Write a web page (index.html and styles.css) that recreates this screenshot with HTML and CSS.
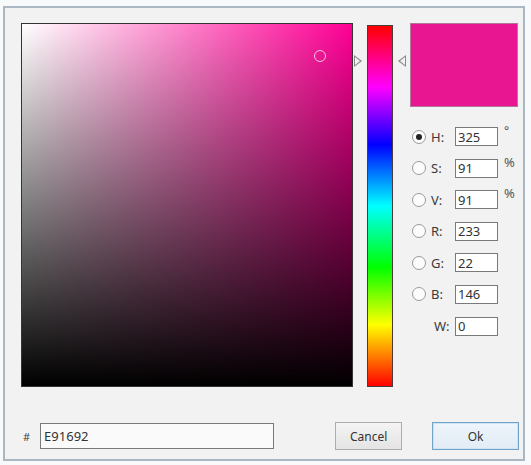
FILE: index.html
```html
<!DOCTYPE html>
<html>
<head>
<title>Color Picker</title>
<link rel="stylesheet" href="styles.css">
</head>
<body>
  <div class="dialog">
    <div class="picker">
      <div class="sv-box">
        <span class="sv-marker"></span>
      </div>
      <div class="hue-col">
        <div class="hue-bar"></div>
        <span class="arrow arrow-left"></span>
        <span class="arrow arrow-right"></span>
      </div>
      <div class="side">
        <div class="preview"></div>
        <div class="fields">
          <div class="field-row">
            <span class="radio checked"></span>
            <span class="label">H:</span>
            <input type="text" class="num" value="325">
            <span class="unit deg">&deg;</span>
          </div>
          <div class="field-row">
            <span class="radio"></span>
            <span class="label">S:</span>
            <input type="text" class="num" value="91">
            <span class="unit">%</span>
          </div>
          <div class="field-row">
            <span class="radio"></span>
            <span class="label">V:</span>
            <input type="text" class="num" value="91">
            <span class="unit">%</span>
          </div>
          <div class="field-row">
            <span class="radio"></span>
            <span class="label">R:</span>
            <input type="text" class="num" value="233">
          </div>
          <div class="field-row">
            <span class="radio"></span>
            <span class="label">G:</span>
            <input type="text" class="num" value="22">
          </div>
          <div class="field-row">
            <span class="radio"></span>
            <span class="label">B:</span>
            <input type="text" class="num" value="146">
          </div>
          <div class="field-row">
            <span class="radio blank"></span>
            <span class="label w-label">W:</span>
            <input type="text" class="num" value="0">
          </div>
        </div>
      </div>
    </div>
    <div class="footer">
      <span class="hash">#</span>
      <input type="text" class="hex" value="E91692">
      <button class="btn btn-cancel">Cancel</button>
      <button class="btn btn-ok">Ok</button>
    </div>
  </div>
</body>
</html>
```
FILE: styles.css
```css
body {
  margin: 0;
  padding: 6px 0 0 3px;
  background: #f7f9fb;
  font-family: "Noto Sans", "Open Sans", sans-serif;
  font-size: 12px;
  color: #333;
}

.dialog {
  box-sizing: border-box;
  width: 522px;
  height: 455px;
  border: 2px solid #aab6c1;
  background: #f2f2f2;
  padding: 15px 0 0 16px;
}

.picker {
  display: flex;
  align-items: flex-start;
}

.sv-box {
  position: relative;
  box-sizing: border-box;
  width: 332px;
  height: 364px;
  border: 1px solid #333;
  background:
    linear-gradient(to top, #000, rgba(0, 0, 0, 0)),
    linear-gradient(to right, #fff, #ff0095);
}

.sv-marker {
  position: absolute;
  left: 292px;
  top: 26px;
  width: 10px;
  height: 10px;
  border: 1px solid #f6c6e2;
  border-radius: 50%;
}

.hue-col {
  position: relative;
  margin: 2px 0 0 14px;
}

.hue-bar {
  box-sizing: border-box;
  width: 26px;
  height: 362px;
  border: 1px solid #4a3a3a;
  background: linear-gradient(to bottom, #f00, #f0f 17%, #00f 33%, #0ff 50%, #0f0 67%, #ff0 83%, #f00);
}

.arrow {
  position: absolute;
  top: 30px;
  width: 0;
  height: 0;
  border-top: 6px solid transparent;
  border-bottom: 6px solid transparent;
}

.arrow::after {
  content: "";
  position: absolute;
  top: -4px;
  border-top: 4px solid transparent;
  border-bottom: 4px solid transparent;
}

.arrow-left {
  left: -13px;
  border-left: 8px solid #8a8a8a;
}

.arrow-left::after {
  left: -7px;
  border-left: 5px solid #f2f2f2;
}

.arrow-right {
  right: -13px;
  border-right: 8px solid #8a8a8a;
}

.arrow-right::after {
  right: -7px;
  border-right: 5px solid #f2f2f2;
}

.side {
  margin-left: 17px;
}

.preview {
  box-sizing: border-box;
  width: 108px;
  height: 84px;
  border: 1px solid #b0779a;
  background: #e91692;
}

.fields {
  display: flex;
  flex-direction: column;
  gap: 12.6px;
  margin-top: 20px;
}

.field-row {
  display: flex;
  align-items: center;
  height: 19px;
}

.radio {
  box-sizing: border-box;
  width: 14px;
  height: 14px;
  margin-left: 2px;
  border: 1px solid #9a9a9a;
  border-radius: 50%;
  background: #fcfcfc;
  display: flex;
  align-items: center;
  justify-content: center;
}

.radio.checked::after {
  content: "";
  width: 6px;
  height: 6px;
  border-radius: 50%;
  background: #222;
}

.radio.blank {
  visibility: hidden;
}

.label {
  width: 24px;
  margin-left: 5px;
  font-size: 13px;
  color: #3a3a3a;
}

.w-label {
  padding-left: 3px;
  width: 21px;
}

.num {
  box-sizing: border-box;
  width: 43px;
  height: 19px;
  margin: 0;
  padding: 0 2px;
  border: 1px solid #7a7a7a;
  background: #fff;
  font-family: "Noto Sans", "Open Sans", sans-serif;
  font-size: 13px;
  color: #333;
}

.unit {
  align-self: flex-start;
  margin: -6px 0 0 6px;
  font-size: 13px;
  color: #555;
}

.unit.deg {
  margin-top: -5px;
  font-size: 12px;
}

.footer {
  display: flex;
  align-items: center;
  margin-top: 35px;
}

.hash {
  margin: 0 10px 0 2px;
  font-size: 11px;
  color: #444;
}

.hex {
  box-sizing: border-box;
  width: 234px;
  height: 26px;
  margin: 0;
  padding: 0 3px;
  border: 1px solid #7a7a7a;
  background: #fafafa;
  font-family: "Noto Sans", "Open Sans", sans-serif;
  font-size: 13px;
  color: #333;
}

.btn {
  box-sizing: border-box;
  height: 28px;
  margin: 0;
  font-family: "Noto Sans", "Open Sans", sans-serif;
  font-size: 12px;
  color: #333;
}

.btn-cancel {
  width: 67px;
  margin-left: 61px;
  border: 1px solid #adadad;
  background: linear-gradient(#f4f4f4, #e4e4e4);
}

.btn-ok {
  width: 87px;
  margin-left: 30px;
  border: 1px solid #6fa3c8;
  box-shadow: inset 0 0 0 1px #cfe3f2;
  background: linear-gradient(#eef5fb, #e2ecf5);
}
```
